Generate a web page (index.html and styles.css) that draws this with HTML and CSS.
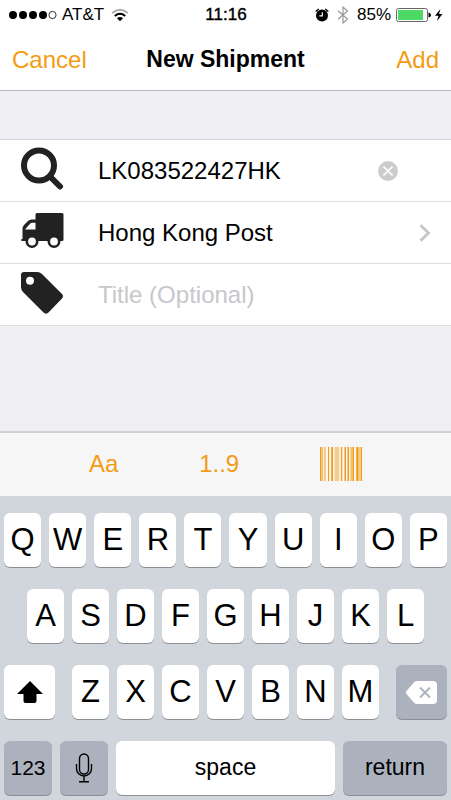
FILE: index.html
```html
<!DOCTYPE html>
<html lang="en">
<head>
<meta charset="utf-8">
<meta name="viewport" content="width=device-width, initial-scale=1">
<title>New Shipment</title>
<link rel="stylesheet" href="styles.css">
</head>
<body>
<div class="screen">
  <div class="status">
    <div class="status-side">
      <svg class="signal" width="48" height="10" viewBox="0 0 48 10" aria-hidden="true">
        <circle cx="4" cy="5" r="4"/><circle cx="14" cy="5" r="4"/><circle cx="24" cy="5" r="4"/><circle cx="34" cy="5" r="4"/>
        <circle cx="43.500" cy="5" r="3.600" fill="none" stroke="#000" stroke-width=".8"/>
      </svg>
      <span class="carrier">AT&amp;T</span>
      <svg width="18" height="14" viewBox="0 0 18 14" fill="none" stroke-width="2" aria-hidden="true">
        <path d="M1.200 5Q9-1.500 16.800 5" stroke="#aaa"/>
        <path d="M3.800 8Q9 3.600 14.200 8" stroke="#000"/>
        <path d="M6 10.200Q9 8 12 10.200L9 13.200Z" fill="#000"/>
      </svg>
    </div>
    <time class="clock">11:16</time>
    <div class="status-side status-right">
      <svg width="14" height="14" viewBox="0 0 14 14" aria-hidden="true">
        <circle cx="7" cy="7.500" r="6"/>
        <path d="M.6 3.600L3.800.9M13.400 3.600L10.200.9" stroke="#000" stroke-width="1.300"/>
        <path d="M7.300 4.200V7.800H4.400" fill="none" stroke="#fff" stroke-width="1.200"/>
      </svg>
      <svg class="bluetooth" width="12" height="18" viewBox="0 0 12 18" fill="none" stroke="#999" stroke-width="1.200" aria-hidden="true">
        <path d="M1 4.700L10.500 13L6 17V1L10.500 5L1 13.300"/>
      </svg>
      <span>85%</span>
      <svg class="battery" width="35" height="14" viewBox="0 0 35 14" aria-hidden="true">
        <rect x=".5" y=".5" width="31" height="13" rx="2" fill="#fff" stroke="#666"/>
        <rect x="2" y="2" width="25" height="10" fill="#4cd964"/>
        <path d="M32.500 4.500Q35 5 35 7T32.500 9.500Z"/>
      </svg>
      <svg width="8" height="12" viewBox="0 0 8 12" aria-hidden="true"><path d="M5.500 0L0 6.800H3.500L2 12L7.500 5H4Z"/></svg>
    </div>
  </div>

  <header class="nav">
    <button class="nav-button" type="button">Cancel</button>
    <h1>New Shipment</h1>
    <button class="nav-button nav-add" type="button">Add</button>
  </header>

  <main class="content">
    <form class="form">
      <div class="row">
        <label class="row-icon" for="number" aria-label="Tracking number">
          <svg width="44" height="44" viewBox="0 0 44 44" fill="none" stroke="#222"><circle cx="19" cy="18.500" r="15" stroke-width="6"/><path d="M30 29.500L40 39.500" stroke-width="6" stroke-linecap="round"/></svg>
        </label>
        <input class="field" id="number" type="text" value="LK083522427HK">
        <button class="clear" type="button" aria-label="Clear">
          <svg width="20" height="20" viewBox="0 0 20 20"><circle cx="10" cy="10" r="10" fill="#ccc"/><path d="M5.500 5.500L14.500 14.500M14.500 5.500L5.500 14.500" stroke="#fff" stroke-width="1.700"/></svg>
        </button>
      </div>
      <button class="row courier" type="button">
        <span class="row-icon">
          <svg width="44" height="44" viewBox="0 0 44 44" aria-hidden="true">
            <path d="M17 4H42Q43.500 4 43.500 5.500V30.500Q43.500 32 42 32H2.500Q1 32 1 31T2.500 30V19.500Q2.500 17.500 4 16L8 12Q9.500 10.500 11.500 10.500H15.500V5.500Q15.500 4 17 4Z" fill="#222"/>
            <path d="M5 20.500L10.500 14.200Q11 13.700 12 13.700H15.500V20.500Z" fill="#fff"/>
            <g fill="#fff" stroke="#222" stroke-width="2.600"><circle cx="12" cy="32.500" r="5.200"/><circle cx="34" cy="32.500" r="5.200"/></g>
          </svg>
        </span>
        <span class="courier-name">Hong Kong Post</span>
        <svg class="chevron" width="12" height="18" viewBox="0 0 12 18" fill="none" stroke="#c7c7cc" stroke-width="3" aria-hidden="true"><path d="M1.500 1.200L9.500 9L1.500 16.800"/></svg>
      </button>
      <div class="row">
        <label class="row-icon" for="title" aria-label="Title">
          <svg width="44" height="44" viewBox="0 0 44 44"><path fill="#222" fill-rule="evenodd" d="M4 1H17Q20 1 22 3L42 23Q44 25.200 42 27.500L28.500 41.500Q26 43.800 23.500 41.500L3 21Q1 19 1 16V4Q1 1 4 1ZM10 5.800A4 4 0 1 0 10 13.800A4 4 0 1 0 10 5.800Z"/></svg>
        </label>
        <input class="field" id="title" type="text" placeholder="Title (Optional)">
      </div>
    </form>
  </main>

  <div class="toolbar">
    <button type="button">Aa</button>
    <button type="button">1..9</button>
    <button type="button" aria-label="Scan barcode">
      <svg width="42" height="34" viewBox="0 0 42 34" fill="#f39c12" aria-hidden="true">
        <path d="M0 0H1.400V34H0ZM8 0H9.100V34H8ZM11.200 0H13V34H11.200ZM21 0H22.200V34H21ZM24.500 0H26V34H24.500ZM27.500 0H29V34H27.500ZM33 0H34V34H33ZM36.200 0H38.500V34H36.200ZM41 0H42V34H41Z"/>
        <path opacity=".6" d="M1.800 0H3.200V34H1.800ZM30.300 0H33V34H30.300Z"/>
        <path opacity=".45" d="M4 0H6V34H4ZM14.500 0H19.300V34H14.500ZM38.500 0H41V34H38.500Z"/>
      </svg>
    </button>
  </div>

  <div class="keyboard">
    <div class="keys">
      <button type="button">Q</button><button type="button">W</button><button type="button">E</button><button type="button">R</button><button type="button">T</button><button type="button">Y</button><button type="button">U</button><button type="button">I</button><button type="button">O</button><button type="button">P</button>
    </div>
    <div class="keys keys-home">
      <button type="button">A</button><button type="button">S</button><button type="button">D</button><button type="button">F</button><button type="button">G</button><button type="button">H</button><button type="button">J</button><button type="button">K</button><button type="button">L</button>
    </div>
    <div class="keys keys-lower">
      <button class="side-key" type="button" aria-label="Shift">
        <svg width="26" height="22" viewBox="0 0 26 22"><path d="M13 0L26 13H19.500V20Q19.500 22 17.500 22H8.500Q6.500 22 6.500 20V13H0Z"/></svg>
      </button>
      <div class="keys keys-group">
        <button type="button">Z</button><button type="button">X</button><button type="button">C</button><button type="button">V</button><button type="button">B</button><button type="button">N</button><button type="button">M</button>
      </div>
      <button class="side-key dark" type="button" aria-label="Delete">
        <svg width="31" height="23" viewBox="0 0 31 23"><path fill="#fff" d="M11 0H27Q31 0 31 4V19Q31 23 27 23H11Q9.500 23 8.300 21.900L.7 13.200Q-.7 11.500.7 9.800L8.300 1.100Q9.500 0 11 0Z"/><path d="M14 6.500L24 16.500M24 6.500L14 16.500" stroke="#abb2be" stroke-width="1.800"/></svg>
      </button>
    </div>
    <div class="keys keys-words">
      <button class="small-key dark" type="button">123</button>
      <button class="small-key dark" type="button" aria-label="Dictation">
        <svg width="18" height="30" viewBox="0 0 18 30" fill="none" stroke="#000" stroke-width="1.400"><rect x="4.500" y="1" width="9" height="20" rx="4.500"/><path d="M1.500 11V15.500A7.500 7.500 0 0 0 16.500 15.500V11M9 23V28.500M4 28.700H14"/></svg>
      </button>
      <button type="button">space</button>
      <button class="return-key dark" type="button">return</button>
    </div>
  </div>
</div>
</body>
</html>
```
FILE: styles.css
```css
* {
  box-sizing: border-box;
}

body {
  margin: 0;
  background: #efeff4;
  color: #000;
  font-family: "Liberation Sans", Arial, sans-serif;
}

button,
input {
  margin: 0;
  padding: 0;
  border: 0;
  border-radius: 0;
  background: none;
  color: inherit;
  font: inherit;
}

svg {
  display: block;
  flex: none;
}

.screen {
  display: flex;
  flex-direction: column;
  min-height: 100vh;
}

.status {
  display: flex;
  align-items: center;
  height: 29px;
  padding: 0 8px 0 9px;
  background: #fff;
  font-size: 17px;
}

.status-side {
  display: flex;
  flex: 1;
  align-items: center;
}

.carrier {
  margin: 0 7px 0 5px;
}

.clock {
  -webkit-text-stroke: 0.4px #000;
}

.status-right {
  justify-content: flex-end;
}

.bluetooth {
  margin: 0 8px;
}

.battery {
  margin: 0 4px 0 5px;
}

.nav {
  display: grid;
  grid-template-columns: 1fr auto 1fr;
  align-items: center;
  height: 62px;
  padding: 0 12px;
  border-bottom: 1px solid #b7b7bb;
  background: #fff;
}

.nav h1 {
  margin: 0;
  font-size: 23px;
}

.nav-button {
  justify-self: start;
  color: #f39c12;
  font-size: 24px;
}

.nav-add {
  justify-self: end;
}

.content {
  flex: 1;
  padding: 48px 0;
}

.form {
  border-top: 1px solid #d4d4d9;
  background: #fff;
  font-size: 24px;
}

.row {
  display: flex;
  align-items: center;
  width: 100%;
  height: 62px;
  padding: 0 20px;
  border-bottom: 1px solid #dedee1;
  text-align: left;
}

.row-icon {
  flex: none;
  width: 78px;
  padding-bottom: 3px;
}

.field {
  flex: 1;
  min-width: 0;
  height: 44px;
  outline: 0;
}

.field::placeholder {
  color: #c7c7cc;
  opacity: 1;
}

.clear {
  margin-right: 33px;
}

.courier-name {
  flex: 1;
}

.toolbar {
  display: flex;
  align-items: center;
  justify-content: space-between;
  height: 65px;
  padding: 0 89px 2px;
  border-top: 2px solid #cfcfd4;
  background: #f6f6f7;
  color: #f39c12;
  font-size: 24px;
}

.keyboard {
  display: flex;
  flex-direction: column;
  gap: 22px;
  padding: 17px 4px 5px;
  background: #d1d5dc;
}

.keys {
  display: flex;
  gap: 8px;
}

.keys button {
  display: flex;
  flex: 1;
  align-items: center;
  justify-content: center;
  height: 54px;
  border-radius: 6px;
  background: #fff;
  box-shadow: 0 1px 0 #8b8e94;
  font-size: 31px;
}

.keys-home {
  padding: 0 23px;
}

.keys-lower {
  gap: 17px;
}

.keys-group {
  flex: 1;
}

.keys-words button {
  padding-bottom: 2px;
  font-size: 23px;
}

.keys .dark {
  background: #abb2be;
}

.keys .side-key {
  flex: 0 0 51px;
}

.keys .small-key {
  flex: 0 0 48px;
  padding-bottom: 0;
  font-size: 21px;
}

.keys .return-key {
  flex: 0 0 104px;
}
```
